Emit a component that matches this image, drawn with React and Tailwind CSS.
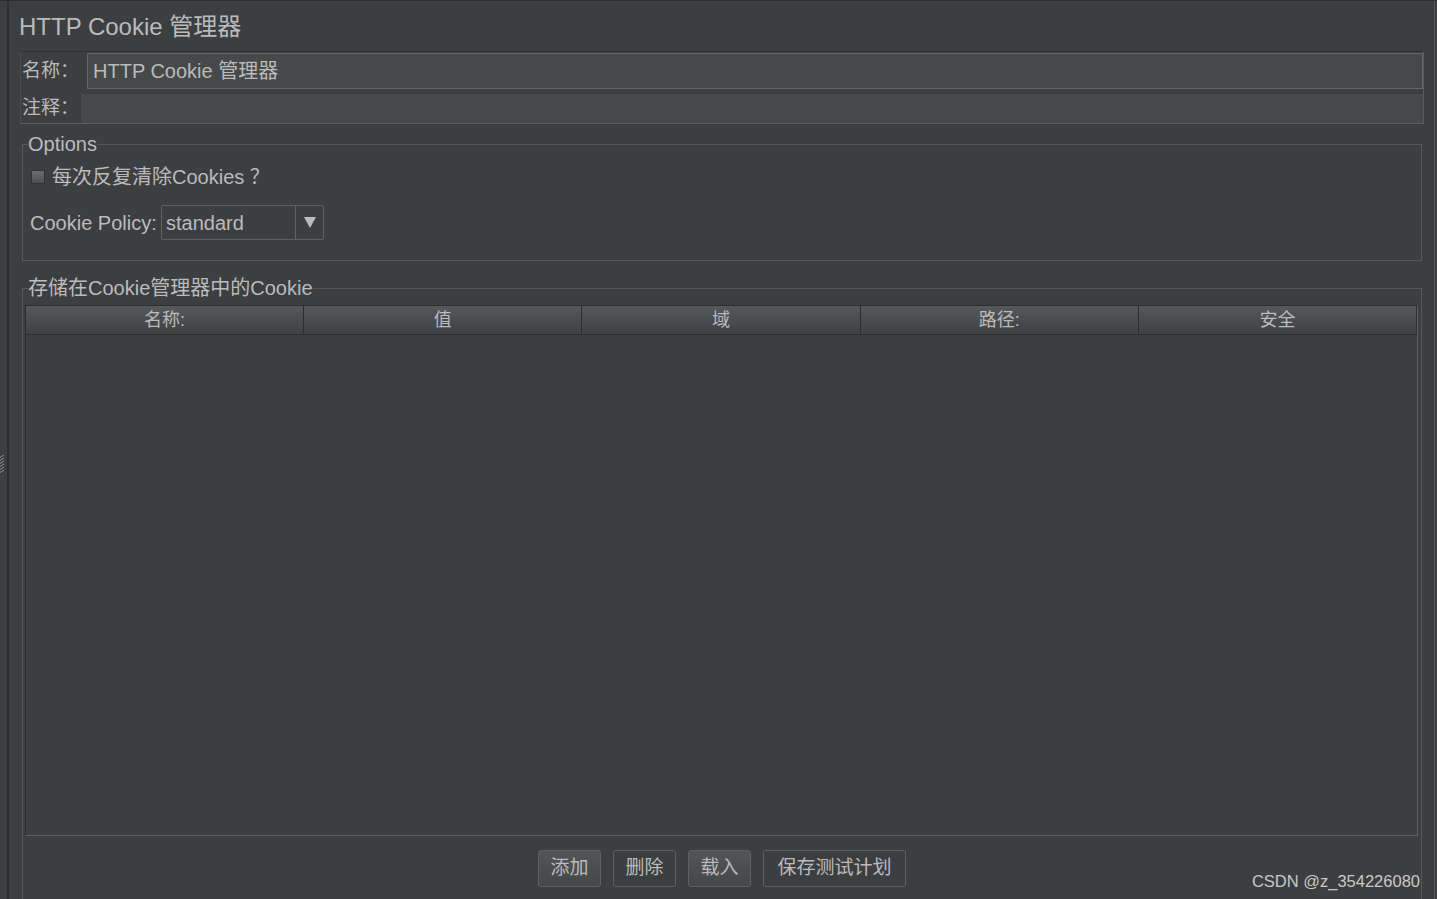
export default function App() {
  const cols = ["名称:", "值", "域", "路径:", "安全"];
  return (
    <div className="relative flex w-[1437px] h-[899px] overflow-hidden bg-[#3c3f41] text-[#bbbbbb] border-t border-[#2b2d2e] font-['Liberation_Sans','Noto_Sans_CJK_SC',sans-serif]">
      {/* left strip with grip */}
      <div className="w-[7px] shrink-0 flex flex-col">
        <div className="h-[454px]" />
        <svg width="5" height="18" viewBox="0 0 5 18">
          {[0, 3, 6, 9, 12, 15].map((y) => (
            <path key={y} d={`M0 ${y + 2.5} L4 ${y}`} stroke="#8c8f91" strokeWidth="1" />
          ))}
        </svg>
      </div>
      <div className="w-[2px] shrink-0 bg-[#2b2d2e]" />

      {/* main panel */}
      <div className="flex-1 mr-[2px] border-r border-[#55585a] flex flex-col pl-[10px] pr-[10px] min-w-0">
        <div className="h-[50px] shrink-0 flex items-center pt-[2px] text-[24px] leading-none">
          HTTP Cookie 管理器
        </div>

        {/* name / comment box */}
        <div className="shrink-0 ml-[1px] border border-[#5a5d5f] border-t-[#2e3032] border-l-[#4a4d4f]">
          <div className="flex mt-[1px] h-[36px]">
            <div className="w-[66px] pl-[1px] flex items-center text-[19px]">名称：</div>
            <div className="flex-1 bg-[#45494a] border border-[#646769] flex items-center pl-[5px] text-[20px]">
              HTTP Cookie 管理器
            </div>
          </div>
          <div className="flex mt-[5px] h-[29px]">
            <div className="w-[60px] pl-[1px] flex items-center text-[19px]">注释：</div>
            <div className="flex-1 bg-[#45494a]" />
          </div>
        </div>

        {/* Options */}
        <fieldset className="shrink-0 mt-[8px] ml-[3px] mr-[2px] border border-[#55585a] pb-[20px]">
          <legend className="ml-[5px] text-[20px] leading-[24px]">Options</legend>
          <div className="flex items-center h-[24px] mt-[9px] ml-[8px]">
            <div className="w-[14px] h-[14px] border border-[#2f3133] bg-gradient-to-b from-[#6b6e70] to-[#4d5052] rounded-[2px]" />
            <span className="ml-[7px] text-[20px]">每次反复清除Cookies ？</span>
          </div>
          <div className="flex items-center mt-[16px] ml-[7px]">
            <span className="w-[131px] text-[20px]">Cookie Policy:</span>
            <div className="flex w-[163px] h-[35px] border border-[#5e6163] rounded-[2px]">
              <div className="flex-1 flex items-center pl-[4px] text-[20px]">standard</div>
              <div className="w-[28px] border-l border-[#5e6163] flex items-center justify-center">
                <svg width="12" height="11" viewBox="0 0 12 11">
                  <path d="M0 0 L12 0 L6 11 Z" fill="#bbbbbb" />
                </svg>
              </div>
            </div>
          </div>
        </fieldset>

        {/* Stored cookies */}
        <fieldset className="shrink-0 mt-[15px] ml-[3px] mr-[2px] border border-[#55585a] pb-[40px]">
          <legend className="ml-[5px] text-[20px] leading-[24px]">存储在Cookie管理器中的Cookie</legend>
          <div className="mt-[5px] ml-[2px] mr-[3px] h-[531px] flex flex-col border-t border-l border-[#2b2d2e] border-r-[#5e6163] border-b-[#5e6163] border-r border-b">
            <div className="grid grid-cols-5 h-[29px] border-b border-[#2b2d2e] shrink-0">
              {cols.map((c) => (
                <div
                  key={c}
                  className="flex items-center justify-center text-[18px] bg-gradient-to-b from-[#55595c] to-[#3e4143] border-r border-[#2b2d2e]"
                >
                  {c}
                </div>
              ))}
            </div>
            <div className="flex-1" />
          </div>
          <div className="flex justify-center gap-[12px] mt-[14px]">
            <div className="w-[63px] h-[37px] flex items-center justify-center rounded-[3px] border border-[#5e6163] bg-gradient-to-b from-[#515558] to-[#45484a] text-[19px]">添加</div>
            <div className="w-[63px] h-[37px] flex items-center justify-center rounded-[3px] border border-[#5e6163] text-[19px]">删除</div>
            <div className="w-[63px] h-[37px] flex items-center justify-center rounded-[3px] border border-[#5e6163] bg-gradient-to-b from-[#515558] to-[#45484a] text-[19px]">载入</div>
            <div className="w-[143px] h-[37px] flex items-center justify-center rounded-[3px] border border-[#5e6163] text-[19px]">保存测试计划</div>
          </div>
        </fieldset>
      </div>

      <div className="absolute right-[17px] top-[870px] text-[16.5px] leading-[20px] text-[#c8c8c8]">
        CSDN @z_354226080
      </div>
    </div>
  );
}
